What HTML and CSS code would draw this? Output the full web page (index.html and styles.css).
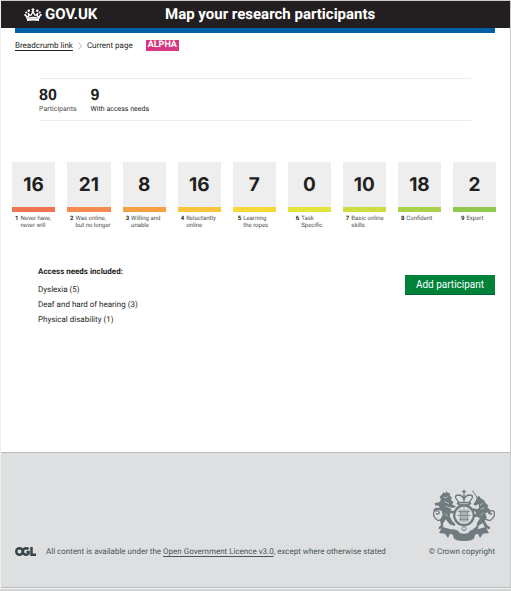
FILE: index.html
```html
<!DOCTYPE html>
<html lang="en">
<head>
<meta charset="utf-8">
<meta name="viewport" content="width=device-width, initial-scale=1">
<title>Map your research participants</title>
<link rel="stylesheet" href="styles.css">
</head>
<body>
<div class="page">
  <header class="header">
    <a class="brand" href="#">
      <svg class="crown" viewBox="0 0 36 26" aria-hidden="true">
        <g fill="currentColor">
          <circle cx="18" cy="7" r="2.4"/><circle cx="9.5" cy="5.5" r="2.4"/><circle cx="26.500" cy="5.500" r="2.4"/>
          <circle cx="4.500" cy="9" r="2.2"/><circle cx="31.500" cy="9" r="2.2"/><circle cx="2.500" cy="14" r="2.2"/><circle cx="33.500" cy="14" r="2.2"/>
          <path d="M17 0h2v2h2v2h-2v2h-2V4h-2V2h2zM6 22q12-3 24 0v4q-12-2-24 0z"/>
        </g>
        <path d="M6.500 21L3.500 15q3 4 6 1l-1-6q3 6 6 4l2.500-5h2l2.500 5q3 2 6-4l-1 6q3 3 6-1l-3 6Q18 17 6.500 21z" fill="none" stroke="currentColor" stroke-width="2.600"/>
      </svg>
      <span>GOV.UK</span>
    </a>
    <h1 class="title">Map your research participants</h1>
  </header>
  <div class="stripe"></div>
  <nav class="crumbs" aria-label="Breadcrumb">
    <a href="#">Breadcrumb link</a>
    <svg class="chevron" viewBox="0 0 4 8" aria-hidden="true"><path d="M.5.500L3.500 4l-3 3.500" fill="none" stroke="#b5b8ba"/></svg>
    <span>Current page</span>
    <strong class="phase">ALPHA</strong>
  </nav>
  <main>
    <dl class="stats">
      <div><dt>Participants</dt><dd>80</dd></div>
      <div><dt class="dark">With access needs</dt><dd>9</dd></div>
    </dl>
    <ol class="scale">
      <li class="l1"><div class="tile">16</div><p><b>1</b><span>Never have,<br>never will</span></p></li>
      <li class="l2"><div class="tile">21</div><p><b>2</b><span>Was online,<br>but no longer</span></p></li>
      <li class="l3"><div class="tile">8</div><p><b>3</b><span>Willing and<br>unable</span></p></li>
      <li class="l4"><div class="tile">16</div><p><b>4</b><span>Reluctantly<br>online</span></p></li>
      <li class="l5"><div class="tile">7</div><p><b>5</b><span>Learning<br>the ropes</span></p></li>
      <li class="l6"><div class="tile">0</div><p><b>6</b><span>Task<br>Specific</span></p></li>
      <li class="l7"><div class="tile">10</div><p><b>7</b><span>Basic online<br>skills</span></p></li>
      <li class="l8"><div class="tile">18</div><p><b>8</b><span>Confident</span></p></li>
      <li class="l9"><div class="tile">2</div><p><b>9</b><span>Expert</span></p></li>
    </ol>
    <section class="needs">
      <div>
        <h2>Access needs included:</h2>
        <ul>
          <li>Dyslexia (5)</li>
          <li>Deaf and hard of hearing (3)</li>
          <li>Physical disability (1)</li>
        </ul>
      </div>
      <button class="add" type="button">Add participant</button>
    </section>
  </main>
  <footer class="footer">
    <div class="licence">
      <svg class="ogl" viewBox="0 0 42 18" aria-label="OGL" role="img">
        <g fill="none" stroke="#37444a" stroke-width="5">
          <circle cx="9" cy="9" r="6.500"/><path d="M27 4.500A6.500 6.500 0 1 0 27 13.500V10h-4"/><path d="M33 0v15.500h9"/>
        </g>
      </svg>
      <p>All content is available under the <a href="#">Open Government Licence v3.0</a>, except where otherwise stated</p>
    </div>
    <div class="copyright">
      <svg class="arms" viewBox="0 0 186 156" aria-hidden="true">
        <g fill="none" stroke="#707b7f" stroke-width="4" stroke-linecap="round">
          <path d="M12 92C-6 78 2 60 14 66s-2 12-4 8M14 94q12 2 18-10M174 92c18-14 10-32-2-26s2 12 4 8M172 94q-12 2-18-10"/>
          <path d="M133 26L119 6" stroke-width="3"/>
          <circle cx="93" cy="79" r="29" stroke-width="8"/>
          <path d="M76 38Q58 18 78 18q12 2 15 15 3-13 15-15 20 0 2 20M93 18v18M73 44h40" stroke-width="4"/>
        </g>
        <g fill="#707b7f">
          <path d="M91 2h4v4h4v4h-4v7h-4v-7h-4V6h4zM72 38h42l-3 11H75z"/>
          <path d="M28 15l4-5 5 3 4-6 4 6 6-2-1 8 7 8-4 5 8 7-3 8 11 5-7 5-11-2 4 10 11 1-3 8-11-2-2 10 8 15 9 8-2 6-15-5-12-15-8 13 1 14-14 3 1-8 6-4-3-17 8-14-3-13-14-2-7 5-4-5 6-7 13 1-3-7-11-1-1-7 14-2 5-8-4-9z"/>
          <path d="M132 24l7-3 3 6 11 7 7 12 6 2-3 7 8 7 3 11-6 3-5-6-6 3 4 13-6 10 9 14 8 4-2 7-13-4-8-15-12 8-3 13-13 4-1-7 10-7 3-13 8-12-9-5-11 2-3-7 11-3-1-7-11-4 3-6 13 3 5-5-1-11-10 5-6-4 7-10z"/>
          <path d="M28 114l25 7q22-1 27 11 13 5 26 0 5-12 27-11l25-7 10 18-18 2-9 13-6-12q-10-1-10 9-2 12-32 12t-32-12q0-10-10-9l-6 12-9-13-18-2z"/>
        </g>
        <g fill="none" stroke="#dddfe1" stroke-width="3">
          <circle cx="93" cy="79" r="25" stroke-width="2"/>
          <path d="M31 24l8 3 5-4M34 38l14 6M38 52l13 4M35 73l9 8M150 42l-9 8M155 56l-12 5M151 71l-8 8M73 121q20 14 40 0M79 44h28" stroke-width="2"/>
        </g>
        <path d="M75 68h36M73 79h40M78 91h30M82 61v35M93 57v44M104 61v35M87 64v34M99 64v34" fill="none" stroke="#808a8e" stroke-width="3"/>
        <circle cx="93" cy="119" r="6" fill="#dddfe1" stroke="#707b7f" stroke-width="3"/>
      </svg>
      <a href="#">© Crown copyright</a>
    </div>
  </footer>
</div>
</body>
</html>
```
FILE: styles.css
```css
* { box-sizing: border-box; }
body {
  margin: 0;
  background: #d3d4d5;
  color: #231f20;
  font-family: Roboto, "Noto Sans", sans-serif;
  font-size: 8px;
  line-height: 15px;
  text-rendering: geometricPrecision;
}
h1, h2, p, dl, dd, ol, ul { margin: 0; padding: 0; }
ol, ul { list-style: none; }
a { color: inherit; }
.page {
  display: flex;
  flex-direction: column;
  min-height: calc(100vh - 2px);
  background: #fff;
  border: 1px solid #c9cccc;
  border-left-color: #f0f0f0;
  border-bottom-color: #f4f4f4;
}
.header {
  display: grid;
  grid-template-columns: 141px 1fr;
  align-items: center;
  height: 27px;
  padding-left: 23px;
  background: #231f20;
  color: #fff;
}
.brand {
  display: flex;
  align-items: center;
  gap: 3px;
  font-size: 15px;
  font-weight: 700;
  text-decoration: none;
}
.crown { width: 18px; height: 13px; }
.title { font-size: 15px; font-weight: 700; white-space: nowrap; }
.stripe { height: 5px; margin: 0 15px 0 14px; background: #005ea5; }
.crumbs {
  display: flex;
  align-items: center;
  height: 25px;
  padding: 0 14px;
}
.crumbs a { text-underline-offset: 2px; }
.chevron { width: 4px; height: 8px; margin: 0 5px; }
.phase {
  margin-left: 13px;
  padding: 0 2px;
  background: #d53880;
  color: #fff;
  font-size: 9px;
  line-height: 11px;
}
.stats {
  display: flex;
  gap: 14px;
  height: 43px;
  margin: 20px 39px 0 38px;
  padding-top: 8px;
  border: solid #ececec;
  border-width: 1px 0;
}
.stats div { display: flex; flex-direction: column-reverse; justify-content: flex-end; }
.stats dt { color: #4d4b4c; font-size: 7px; line-height: 10px; }
.stats .dark { color: #231f20; }
.stats dd { font: 700 16px/17px "Liberation Sans", sans-serif; }
.scale {
  display: grid;
  grid-template-columns: repeat(9, 1fr);
  gap: 12px;
  margin: 41px 14px 0 11px;
}
.tile {
  height: 50px;
  border-bottom: 5px solid;
  background: #eee;
  font: 700 19px/46px Inter, sans-serif;
  text-align: center;
}
.scale p {
  display: flex;
  gap: 2px;
  min-height: 14px;
  margin-top: 3px;
  padding-left: 3px;
  color: #4d4b4c;
  font-size: 6px;
  line-height: 7px;
  white-space: nowrap;
}
.scale b { color: #231f20; }
.l1 .tile { border-color: #ef7552; }
.l2 .tile { border-color: #f58b51; }
.l3 .tile { border-color: #f5a047; }
.l4 .tile { border-color: #f7c43c; }
.l5 .tile { border-color: #f6d936; }
.l6 .tile { border-color: #e3e43c; }
.l7 .tile { border-color: #cfdc42; }
.l8 .tile { border-color: #aad14b; }
.l9 .tile { border-color: #91c950; }
.l5 p { padding-left: 5px; }
.l6 p, .l9 p { padding-left: 8px; }
.needs {
  display: flex;
  justify-content: space-between;
  align-items: flex-start;
  margin: 35px 15px 0 37px;
}
.needs h2 { margin-bottom: 3px; font-size: 8px; font-weight: 700; }
.add {
  width: 90px;
  height: 20px;
  margin-top: 11px;
  padding: 0;
  border: 0;
  border-bottom: 1px solid #006435;
  background: #00823b;
  color: #fff;
  font: 10px/19px Roboto, sans-serif;
}
.footer {
  display: flex;
  justify-content: space-between;
  align-items: flex-end;
  min-height: 136px;
  margin-top: auto;
  padding: 33px 15px 28px 14px;
  border: solid #b8bcbe;
  border-width: 1px 0;
  background: #dddfe1;
  color: #4c5558;
}
.licence { display: flex; align-items: center; gap: 10px; }
.ogl { width: 21px; height: 9px; }
.licence a { text-underline-offset: 2px; }
.copyright { display: flex; flex-direction: column; align-items: flex-end; gap: 3px; }
.copyright a { text-decoration: none; }
.arms { width: 62px; height: 52px; }
```
